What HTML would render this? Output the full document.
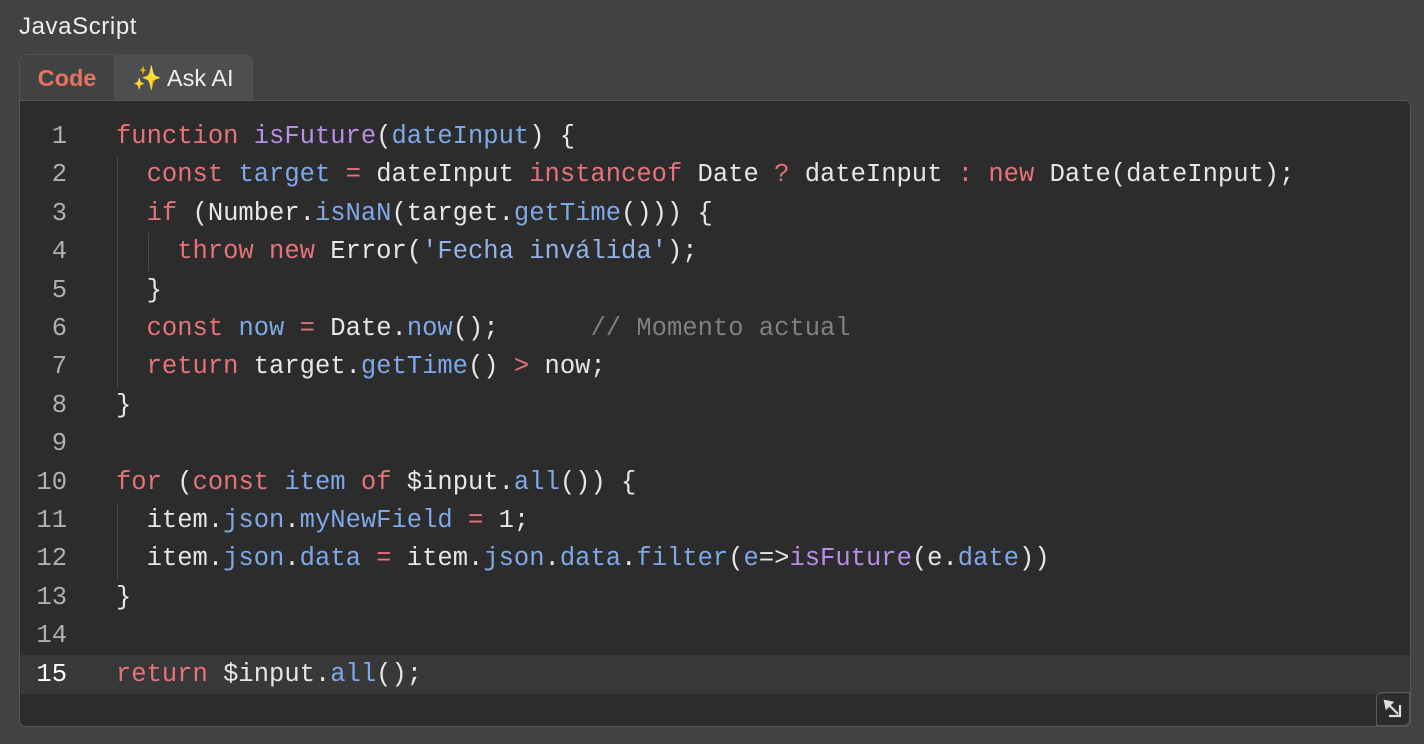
<!DOCTYPE html><html><head><style>
body{margin:0;width:1424px;height:744px;background:#414244;font-family:"Liberation Sans",sans-serif;overflow:hidden;position:relative}
.title{position:absolute;left:19px;top:13px;font-size:24px;letter-spacing:0.6px;color:#eee}
.tabs{position:absolute;left:19px;top:54px;width:232px;height:47px;border:1px solid #505153;border-bottom:none;border-radius:8px 8px 0 0;overflow:hidden;display:flex}
.t1{width:94px;color:#e8735f;font-weight:bold;font-size:23.5px;line-height:47px;text-align:center}
.t2{flex:1;background:#4d4e50;color:#eee;font-size:23.5px;line-height:47px;text-align:center}
.ed{position:absolute;left:19px;top:100px;width:1390px;height:625px;background:#2c2c2c;border:1px solid #555658;border-radius:0 6px 6px 6px;overflow:hidden}
.ln{position:absolute;left:0;width:1390px;height:38.4px;font-family:"Liberation Mono",monospace;font-size:25.5px;line-height:38.4px;white-space:pre;color:#e6e6e6}
.n{position:absolute;right:1343px;color:#b0b0b0;text-align:right}
.c{position:absolute;left:96px}
.k{color:#e6737a}.f{color:#b78ee8}.v{color:#7fa8e8}.s{color:#93b3e8}.cm{color:#808080}
.g{position:absolute;width:1px;background:#4a4a4a}
.rs{position:absolute;right:0;bottom:0;width:32px;height:32px;border:1px solid #5a5a5c;border-radius:6px 0 6px 0;color:#ddd}
</style></head><body>
<div class="title">JavaScript</div>
<div class="tabs"><div class="t1">Code</div><div class="t2">✨ Ask AI</div></div>
<div class="ed">
<div class="g" style="left:97px;top:56px;height:231px"></div>
<div class="g" style="left:128px;top:132px;height:38px"></div>
<div class="g" style="left:97px;top:402px;height:77px"></div>
<div style="position:absolute;left:0;top:554px;width:1390px;height:39px;background:#383838"></div>
<div class="ln" style="top:17px"><span class="n">1</span><span class="c"><span class="k">function</span> <span class="f">isFuture</span>(<span class="v">dateInput</span>) {</span></div>
<div class="ln" style="top:55.4px"><span class="n">2</span><span class="c">  <span class="k">const</span> <span class="v">target</span> <span class="k">=</span> dateInput <span class="k">instanceof</span> Date <span class="k">?</span> dateInput <span class="k">:</span> <span class="k">new</span> Date(dateInput);</span></div>
<div class="ln" style="top:93.8px"><span class="n">3</span><span class="c">  <span class="k">if</span> (Number.<span class="v">isNaN</span>(target.<span class="v">getTime</span>())) {</span></div>
<div class="ln" style="top:132.2px"><span class="n">4</span><span class="c">    <span class="k">throw</span> <span class="k">new</span> Error(<span class="s">'Fecha inválida'</span>);</span></div>
<div class="ln" style="top:170.6px"><span class="n">5</span><span class="c">  }</span></div>
<div class="ln" style="top:209px"><span class="n">6</span><span class="c">  <span class="k">const</span> <span class="v">now</span> <span class="k">=</span> Date.<span class="v">now</span>();      <span class="cm">// Momento actual</span></span></div>
<div class="ln" style="top:247.4px"><span class="n">7</span><span class="c">  <span class="k">return</span> target.<span class="v">getTime</span>() <span class="k">&gt;</span> now;</span></div>
<div class="ln" style="top:285.8px"><span class="n">8</span><span class="c">}</span></div>
<div class="ln" style="top:324.2px"><span class="n">9</span></div>
<div class="ln" style="top:362.6px"><span class="n">10</span><span class="c"><span class="k">for</span> (<span class="k">const</span> <span class="v">item</span> <span class="k">of</span> $input.<span class="v">all</span>()) {</span></div>
<div class="ln" style="top:401px"><span class="n">11</span><span class="c">  item.<span class="v">json</span>.<span class="v">myNewField</span> <span class="k">=</span> 1;</span></div>
<div class="ln" style="top:439.4px"><span class="n">12</span><span class="c">  item.<span class="v">json</span>.<span class="v">data</span> <span class="k">=</span> item.<span class="v">json</span>.<span class="v">data</span>.<span class="v">filter</span>(<span class="v">e</span>=&gt;<span class="f">isFuture</span>(e.<span class="v">date</span>))</span></div>
<div class="ln" style="top:477.8px"><span class="n">13</span><span class="c">}</span></div>
<div class="ln" style="top:516.2px"><span class="n">14</span></div>
<div class="ln" style="top:554.6px"><span class="n" style="color:#fff">15</span><span class="c"><span class="k">return</span> $input.<span class="v">all</span>();</span></div>
<div class="rs"><svg width="32" height="32" viewBox="0 0 32 32" fill="none" stroke="#ddd" stroke-width="2.2"><path d="M10 10 L21 21"/><path d="M8 8 L15 9.5 L9.5 15 Z" fill="#ddd"/><path d="M12 23 H23 V12"/></svg></div>
</div>
</body></html>
